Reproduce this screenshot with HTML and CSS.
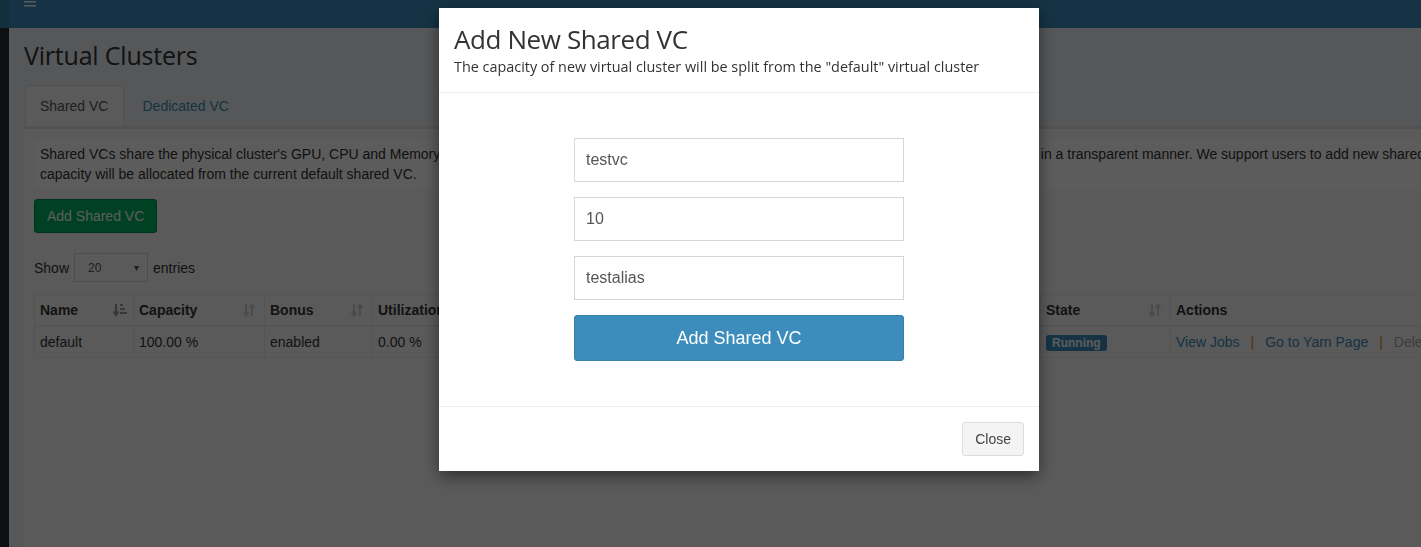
FILE: index.html
```html
<!DOCTYPE html>
<html lang="en">
<head>
<meta charset="utf-8">
<title>Virtual Clusters</title>
<link rel="stylesheet" href="styles.css">
</head>
<body>
<div class="app">
  <header class="navbar">
    <div class="logo"></div>
    <div class="nav-main">
      <svg class="hamburger" width="12" height="8" viewBox="0 0 12 8"><rect x="0" y="1" width="12" height="1.6" fill="#fff"/><rect x="0" y="5" width="12" height="1.6" fill="#fff"/></svg>
    </div>
  </header>
  <div class="main">
    <aside class="sidebar"></aside>
    <section class="content-wrapper">
      <h1 class="page-title">Virtual Clusters</h1>
      <ul class="tabs">
        <li class="tab active">Shared VC</li>
        <li class="tab"><a href="#">Dedicated VC</a></li>
      </ul>
      <div class="tab-content">
        <div class="alert">
          <span class="line">Shared VCs share the physical cluster's GPU, CPU and Memory resources with each other and the jobs of different shared VCs are scheduled across the cluster in a transparent manner. We support users to add new shared VC, and the new VC's</span><br>
          <span class="line">capacity will be allocated from the current default shared VC.</span>
        </div>
        <button class="btn-success">Add Shared VC</button>
        <div class="length">
          <span>Show</span>
          <span class="select"><span>20</span><span class="caret">&#9662;</span></span>
          <span>entries</span>
        </div>
        <table class="vc-table">
          <colgroup>
            <col class="c-name"><col class="c-cap"><col class="c-bonus"><col class="c-util"><col class="c-max"><col class="c-res"><col class="c-jobs"><col class="c-state"><col class="c-act">
          </colgroup>
          <thead>
            <tr>
              <th><div class="th-in"><span>Name</span><svg class="sort on" width="14" height="14" viewBox="0 0 14 14"><path d="M3 1v10M0.5 8.5L3 12l2.5-3.5" fill="none" stroke="currentColor" stroke-width="2"/><rect x="7" y="1" width="3" height="2" fill="currentColor"/><rect x="7" y="5" width="5" height="2" fill="currentColor"/><rect x="7" y="9" width="7" height="2" fill="currentColor"/></svg></div></th>
              <th><div class="th-in"><span>Capacity</span><svg class="sort" width="12" height="14" viewBox="0 0 12 14"><path d="M3 1v11M0.5 9L3 12.5 5.5 9M9 13V2M6.5 5L9 1.5 11.5 5" fill="none" stroke="currentColor" stroke-width="2"/></svg></div></th>
              <th><div class="th-in"><span>Bonus</span><svg class="sort" width="12" height="14" viewBox="0 0 12 14"><path d="M3 1v11M0.5 9L3 12.5 5.5 9M9 13V2M6.5 5L9 1.5 11.5 5" fill="none" stroke="currentColor" stroke-width="2"/></svg></div></th>
              <th><div class="th-in"><span>Utilization</span><svg class="sort" width="12" height="14" viewBox="0 0 12 14"><path d="M3 1v11M0.5 9L3 12.5 5.5 9M9 13V2M6.5 5L9 1.5 11.5 5" fill="none" stroke="currentColor" stroke-width="2"/></svg></div></th>
              <th><div class="th-in"><span>Max Capacity</span><svg class="sort" width="12" height="14" viewBox="0 0 12 14"><path d="M3 1v11M0.5 9L3 12.5 5.5 9M9 13V2M6.5 5L9 1.5 11.5 5" fill="none" stroke="currentColor" stroke-width="2"/></svg></div></th>
              <th><div class="th-in"><span>Resources</span><svg class="sort" width="12" height="14" viewBox="0 0 12 14"><path d="M3 1v11M0.5 9L3 12.5 5.5 9M9 13V2M6.5 5L9 1.5 11.5 5" fill="none" stroke="currentColor" stroke-width="2"/></svg></div></th>
              <th><div class="th-in"><span>Running Jobs</span><svg class="sort" width="12" height="14" viewBox="0 0 12 14"><path d="M3 1v11M0.5 9L3 12.5 5.5 9M9 13V2M6.5 5L9 1.5 11.5 5" fill="none" stroke="currentColor" stroke-width="2"/></svg></div></th>
              <th><div class="th-in"><span>State</span><svg class="sort" width="12" height="14" viewBox="0 0 12 14"><path d="M3 1v11M0.5 9L3 12.5 5.5 9M9 13V2M6.5 5L9 1.5 11.5 5" fill="none" stroke="currentColor" stroke-width="2"/></svg></div></th>
              <th><div class="th-in"><span>Actions</span></div></th>
            </tr>
          </thead>
          <tbody>
            <tr>
              <td>default</td>
              <td>100.00 %</td>
              <td>enabled</td>
              <td>0.00 %</td>
              <td>100.00 %</td>
              <td>0 GPU</td>
              <td>0</td>
              <td><span class="label">Running</span></td>
              <td class="actions"><a href="#">View Jobs</a><span class="sep">|</span><a href="#">Go to Yarn Page</a><span class="sep">|</span><span class="disabled">Delete</span></td>
            </tr>
          </tbody>
        </table>
      </div>
    </section>
  </div>
</div>

<div class="backdrop"></div>

<div class="modal">
  <div class="modal-header">
    <h4 class="modal-title">Add New Shared VC</h4>
    <p class="modal-sub">The capacity of new virtual cluster will be split from the "default" virtual cluster</p>
  </div>
  <div class="modal-body">
    <form class="vc-form">
      <input class="field" type="text" value="testvc">
      <input class="field" type="text" value="10">
      <input class="field" type="text" value="testalias">
      <button type="button" class="btn-primary">Add Shared VC</button>
    </form>
  </div>
  <div class="modal-footer">
    <button type="button" class="btn-default">Close</button>
  </div>
</div>
</body>
</html>
```

FILE: styles.css
```css
html, body {
  margin: 0;
  padding: 0;
  overflow: hidden;
  height: 100%;
}

body {
  font-family: "Liberation Sans", Arial, sans-serif;
  font-size: 14px;
  line-height: 20px;
  color: #333;
  background: #ecf0f5;
}

.app {
  width: 1720px;
  height: 100%;
  display: flex;
  flex-direction: column;
}

/* navbar */
.navbar {
  height: 28px;
  display: flex;
  flex: none;
}
.logo {
  width: 9px;
  background: #367fa9;
}
.nav-main {
  flex: 1;
  background: #3c8dbc;
  padding-left: 15px;
}
.hamburger {
  display: block;
  opacity: 0.9;
}

.main {
  flex: 1;
  display: flex;
}
.sidebar {
  width: 9px;
  flex: none;
  background: #222d32;
}

.content-wrapper {
  flex: 1;
  background: #ecf0f5;
  padding-left: 15px;
  display: flex;
  flex-direction: column;
}

.page-title {
  margin: 9px 0 0 0;
  font-family: "Open Sans", sans-serif;
  font-weight: 400;
  font-size: 25px;
  letter-spacing: -0.2px;
  line-height: 36px;
  color: #333;
  height: 36px;
}

/* tabs */
.tabs {
  list-style: none;
  margin: 12px 0 0 0;
  padding: 0 0 0 1px;
  display: flex;
  gap: 3px;
}
.tab {
  padding: 10px 15px 10px 14px;
  line-height: 20px;
  border: 1px solid transparent;
  border-bottom: 0;
  border-radius: 4px 4px 0 0;
}
.tab.active {
  background: #fafafa;
  border-color: #ddd;
  color: #555;
}
.tab a {
  color: #3c8dbc;
  text-decoration: none;
}

.tab-content {
  flex: 1;
  background: #fafafa;
  border-top: 3px solid #e4e4e4;
  padding: 10px 10px 0 10px;
}

.alert {
  background: #ffffff;
  padding: 5px 6px;
  color: #333;
}
.alert .line {
  white-space: nowrap;
}

.btn-success {
  display: block;
  margin-top: 10px;
  height: 34px;
  padding: 0 12px;
  border: 1px solid #008d4c;
  border-radius: 3px;
  background: #00b461;
  color: #fff;
  font-family: "Liberation Sans", Arial, sans-serif;
  font-size: 14px;
}

.length {
  margin-top: 20px;
  display: flex;
  align-items: center;
  gap: 5px;
  height: 29px;
}
.select {
  width: 74px;
  height: 29px;
  box-sizing: border-box;
  border: 1px solid #d2d6de;
  display: flex;
  align-items: center;
  justify-content: space-between;
  padding: 0 8px 0 13px;
  font-size: 12px;
  color: #555;
}
.select .caret {
  font-size: 10px;
}

/* table */
.vc-table {
  margin-top: 12px;
  border-collapse: collapse;
  table-layout: fixed;
  width: 1536px;
}
.c-name { width: 99px; }
.c-cap { width: 131px; }
.c-bonus { width: 108px; }
.c-util { width: 168px; }
.c-max { width: 170px; }
.c-res { width: 170px; }
.c-jobs { width: 160px; }
.c-state { width: 130px; }
.c-act { width: 400px; }

.vc-table th,
.vc-table td {
  border: 1px solid #ececec;
  padding: 5px 6px 5px 5px;
  text-align: left;
  line-height: 20px;
  white-space: nowrap;
}
.vc-table th {
  font-weight: 700;
  color: #333;
  border-bottom-width: 2px;
}
.th-in {
  display: flex;
  align-items: center;
  justify-content: space-between;
}
.sort {
  color: #d0d0d0;
  margin-right: 3px;
}
.sort.on {
  color: #9a9a9a;
  margin-right: 0;
}

.label {
  display: inline-block;
  background: #3c8dbc;
  color: #fff;
  font-weight: 700;
  font-size: 12px;
  line-height: 16px;
  padding: 0 6px;
  border-radius: 3px;
  vertical-align: middle;
}

.actions a {
  color: #3c8dbc;
  text-decoration: none;
}
.actions .sep {
  color: #e08e0b;
  margin: 0 11px;
}
.actions .disabled {
  color: #aaa;
}

/* modal */
.backdrop {
  position: fixed;
  inset: 0;
  background: rgba(0, 0, 0, 0.64);
}

.modal {
  position: fixed;
  top: 8px;
  left: 439px;
  width: 600px;
  background: #fff;
  box-shadow: 0 5px 15px rgba(0, 0, 0, 0.5);
}

.modal-header {
  padding: 15px 15px 15px 15px;
  border-bottom: 1px solid #eeeeee;
}
.modal-title {
  margin: 0;
  font-family: "Open Sans", sans-serif;
  font-weight: 400;
  font-size: 26px;
  letter-spacing: -0.4px;
  line-height: 32px;
  color: #333;
}
.modal-sub {
  margin: 2px 0 0 0;
  font-family: "Open Sans", sans-serif;
  font-size: 14.4px;
  line-height: 20px;
  color: #333;
}

.modal-body {
  padding: 45px 0;
  display: flex;
  justify-content: center;
}
.vc-form {
  width: 330px;
  display: flex;
  flex-direction: column;
  gap: 15px;
  margin: 0;
}
.field {
  display: block;
  box-sizing: border-box;
  width: 100%;
  height: 44px;
  margin: 0;
  padding: 10px 11px;
  border: 1px solid #d2d6de;
  border-radius: 0;
  font-family: "Liberation Sans", Arial, sans-serif;
  font-size: 16px;
  color: #555;
  outline: none;
}
.btn-primary {
  display: block;
  width: 100%;
  height: 46px;
  border: 1px solid #367fa9;
  border-radius: 3px;
  background: #3c8dbc;
  color: #fff;
  font-family: "Liberation Sans", Arial, sans-serif;
  font-size: 18px;
}

.modal-footer {
  border-top: 1px solid #eeeeee;
  padding: 15px;
  display: flex;
  justify-content: flex-end;
}
.btn-default {
  height: 34px;
  padding: 0 12px;
  border: 1px solid #ddd;
  border-radius: 3px;
  background: #f4f4f4;
  color: #444;
  font-family: "Liberation Sans", Arial, sans-serif;
  font-size: 14px;
}
```
